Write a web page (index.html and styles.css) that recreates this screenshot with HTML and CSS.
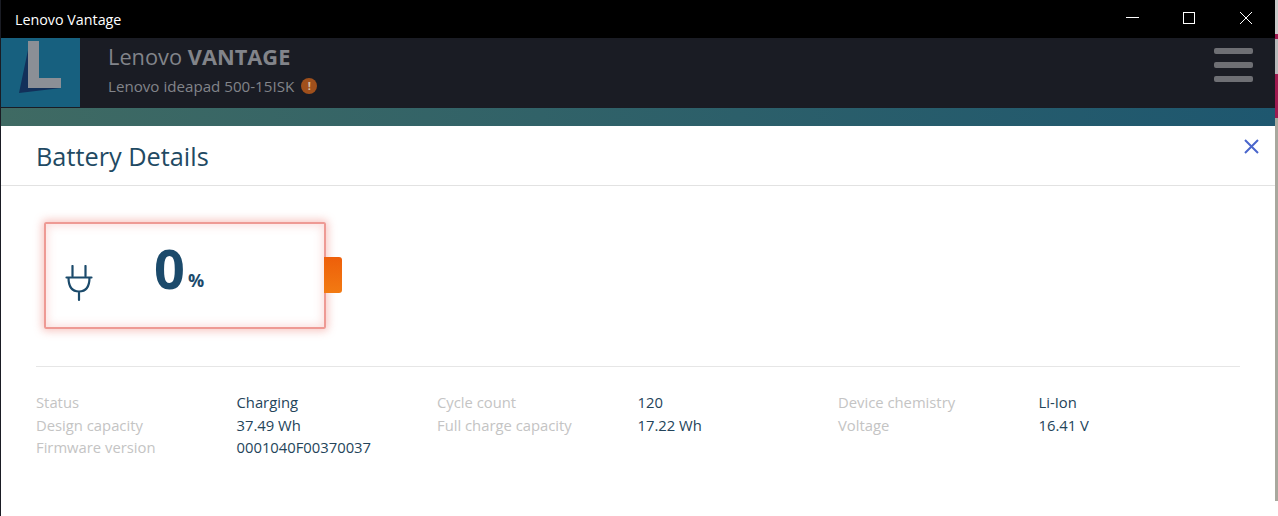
FILE: index.html
```html
<!DOCTYPE html>
<html lang="en">
<head>
  <meta charset="UTF-8">
  <title>Lenovo Vantage</title>
  <link rel="stylesheet" href="styles.css">
</head>
<body>
  <div class="window">
    <div class="titlebar">
      <span class="app-title">Lenovo Vantage</span>
      <div class="win-controls">
        <svg class="win-btn" viewBox="0 0 57 38"><path d="M22 17.500h13" stroke="#fff" fill="none"/></svg>
        <svg class="win-btn" viewBox="0 0 57 38"><rect x="22.500" y="12.500" width="11" height="11" stroke="#fff" fill="none"/></svg>
        <svg class="win-btn" viewBox="0 0 57 38"><path d="M22 12l12 12M34 12L22 24" stroke="#fff" fill="none"/></svg>
      </div>
    </div>

    <div class="header">
      <div class="logo">
        <svg width="79" height="69" viewBox="0 0 79 69">
          <path d="M27 12L18 55L60 50H27Z" fill="#12305a"/>
          <path d="M27 3H38V40H60V50H27Z" fill="#8b8f96"/>
        </svg>
      </div>
      <div class="brand">
        <div class="brand-name">Lenovo <b>VANTAGE</b></div>
        <div class="device">Lenovo ideapad 500-15ISK <span class="warn">!</span></div>
      </div>
      <div class="burger"><i></i><i></i><i></i></div>
    </div>

    <div class="backdrop">
      <div class="modal">
        <div class="modal-head">
          <h1>Battery Details</h1>
          <svg class="close" width="15" height="15" viewBox="0 0 15 15"><path d="M1 1l13 13M14 1L1 14" stroke="#4a66cc" stroke-width="2" fill="none"/></svg>
        </div>
        <div class="modal-body">
          <div class="battery-row">
            <div class="battery">
              <svg class="plug" width="28" height="37" viewBox="0 0 28 37">
                <path d="M7.500 1v10M20.500 1v10M1.500 12.500h25M3.500 12.500c0 8 3 14 10.500 14s10.500-6 10.500-14M14 26.500v8.500" stroke="#1b4a6b" stroke-width="2.200" fill="none" stroke-linecap="round"/>
              </svg>
              <div class="charge"><span class="num">0</span><span class="pct">%</span></div>
            </div>
            <div class="battery-tip"></div>
          </div>
          <div class="info">
            <span class="key">Status</span><span class="val">Charging</span>
            <span class="key">Cycle count</span><span class="val">120</span>
            <span class="key">Device chemistry</span><span class="val">Li-Ion</span>
            <span class="key">Design capacity</span><span class="val">37.49 Wh</span>
            <span class="key">Full charge capacity</span><span class="val">17.22 Wh</span>
            <span class="key">Voltage</span><span class="val">16.41 V</span>
            <span class="key">Firmware version</span><span class="val">0001040F00370037</span>
          </div>
        </div>
      </div>
    </div>
  </div>
  <div class="desktop-edge"></div>
</body>
</html>
```
FILE: styles.css
```css
* { box-sizing: border-box; }
html, body {
  margin: 0;
  height: 100%;
  overflow: hidden;
}
body {
  display: flex;
  font-family: 'Open Sans', 'Noto Sans', sans-serif;
  background-color: #fff;
}
.window {
  display: flex;
  flex-direction: column;
  width: 1275px;
  height: 516px;
  border-left: 1px solid #1a1c24;
}
.desktop-edge {
  width: 3px;
  height: 501px;
  background: linear-gradient(#c9c9c9 0 34px, #a01a50 34px 39px, #b9b9bb 39px 74px, #a01a50 74px 118px, #a8a89e 118px);
}
.titlebar {
  display: flex;
  align-items: center;
  justify-content: space-between;
  height: 38px;
  background-color: #000;
  color: white;
  flex-shrink: 0;
}
.app-title {
  margin-left: 14px;
  font-size: 14.300px;
}
.win-controls {
  display: flex;
}
.win-btn {
  width: 57px;
  height: 38px;
}
.header {
  display: flex;
  height: 70px;
  background-color: #1a1c24;
  flex-shrink: 0;
}
.logo {
  width: 79px;
  height: 69px;
  background-color: #17607f;
}
.brand {
  margin-left: 28px;
  color: #82848a;
}
.brand-name {
  margin-top: 5px;
  font-size: 21.800px;
  line-height: 28px;
}
.brand-name b {
  font-weight: 700;
}
.device {
  display: flex;
  align-items: center;
  gap: 7px;
  margin-top: 5px;
  font-size: 15.150px;
  line-height: 20px;
}
.warn {
  display: flex;
  align-items: center;
  justify-content: center;
  width: 16px;
  height: 16px;
  border-radius: 50%;
  background-color: #a0501c;
  color: #d8c0a8;
  font-size: 11px;
  font-weight: 700;
}
.burger {
  display: flex;
  flex-direction: column;
  gap: 8px;
  margin: 10px 22px 0 auto;
}
.burger i {
  display: block;
  width: 39px;
  height: 6px;
  border-radius: 2px;
  background-color: #6e6f74;
}
.backdrop {
  flex-grow: 1;
  padding-top: 18px;
  background: linear-gradient(90deg, #3f6a63, #1e576f);
  background-size: 100% 18px;
  background-repeat: no-repeat;
}
.modal {
  background: white;
  height: 376px;
  border-radius: 0 4px 0 0;
}
.modal-head {
  display: flex;
  align-items: center;
  justify-content: space-between;
  height: 60px;
  padding: 0 16px 0 35px;
  border-bottom: 1px solid #e2e2e2;
}
h1 {
  margin: 0;
  font-size: 25.300px;
  font-weight: 400;
  color: #1f4a63;
}
.close {
  margin-top: -18px;
}
.modal-body {
  padding: 36px 35px 0 35px;
}
.battery-row {
  display: flex;
  align-items: center;
  margin-left: 8px;
  padding-bottom: 37px;
}
.battery {
  display: flex;
  align-items: center;
  width: 282px;
  height: 107px;
  border: 2px solid #ee9a94;
  border-radius: 2px;
  box-shadow: 0 0 8px 2px rgba(235, 110, 100, 0.4), inset 0 0 8px 2px rgba(235, 110, 100, 0.22);
}
.plug {
  margin: 15px 0 0 19px;
}
.charge {
  margin: 0 0 16px 61px;
  color: #1b4a6b;
  font-weight: 700;
}
.num {
  font-size: 54px;
  line-height: 60px;
}
.pct {
  margin-left: 3px;
  font-size: 18px;
  vertical-align: 2px;
}
.battery-tip {
  width: 18px;
  height: 36px;
  margin: -1px 0 0 -2px;
  border-radius: 0 3px 3px 0;
  background: linear-gradient(#ee5f0a, #f27a12);
}
.info {
  display: grid;
  grid-template-columns: 200.500px 200.500px 200.500px 200.500px 200.500px 1fr;
  grid-auto-rows: 22.500px;
  padding-top: 24px;
  border-top: 1px solid #e6e6e6;
  font-size: 14.800px;
  line-height: 22px;
}
.key {
  color: #c4c4c4;
}
.val {
  color: #24445a;
}
```
